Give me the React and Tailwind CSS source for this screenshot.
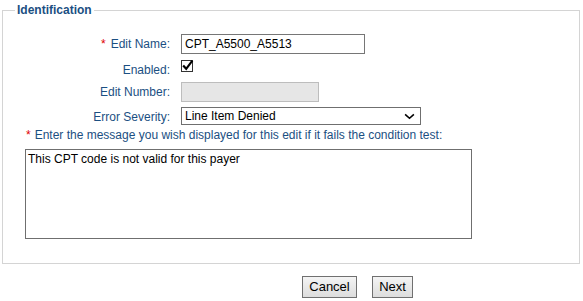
import React from 'react'

const labelCls = "w-[167px] shrink-0 pr-[0px] text-right text-[12px] text-[#1b4f82]"

const App = () => {
  return (
    <div className="w-[583px] h-[301px] bg-white font-['Liberation_Sans',Arial,sans-serif] overflow-hidden">
      <fieldset className="mt-[2px] ml-[2px] mr-[3px] border border-[#d4d4d4] pb-[24px]">
        <legend className="ml-[12px] px-[2px] text-[12px] leading-[16px] font-bold text-[#1b4f82]">
          Identification
        </legend>

        {/* Edit name */}
        <div className="mt-[16px] flex items-center h-[20px]">
          <div className={labelCls}>
            <span className="text-[#e00000] mr-[5px]">*</span>Edit Name:
          </div>
          <input
            className="ml-[11px] w-[184px] h-[20px] border border-[#767676] px-[3px] text-[12px] text-black outline-none"
            defaultValue="CPT_A5500_A5513"
          />
        </div>

        {/* Enabled */}
        <div className="mt-[5px] flex items-center h-[21px]">
          <div className={labelCls}>Enabled:</div>
          <span className="ml-[11px] self-start mt-[1px] w-[12px] h-[12px] border border-[#333] bg-white relative">
            <svg viewBox="0 0 12 12" className="absolute -left-[1px] -top-[3px] w-[13px] h-[14px]">
              <path d="M2 6.5 L4.8 9.5 L10.5 2" fill="none" stroke="#000" strokeWidth="2" />
            </svg>
          </span>
        </div>

        {/* Edit number */}
        <div className="mt-[2px] flex items-center h-[20px]">
          <div className={labelCls}>Edit Number:</div>
          <div className="ml-[11px] w-[138px] h-[20px] border border-[#bdbdbd] bg-[#e6e6e6]" />
        </div>

        {/* Error severity */}
        <div className="mt-[3px] flex items-center h-[22px]">
          <div className={labelCls + " pt-[2px]"}>Error Severity:</div>
          <div className="ml-[11px] w-[240px] h-[18px] border border-[#6f6f6f] flex items-center justify-between pl-[3px] pr-[5px] text-[12px] text-black">
            <span>Line Item Denied</span>
            <svg viewBox="0 0 12 8" className="w-[11px] h-[7px]">
              <path d="M1 1.5 L6 6 L11 1.5" fill="none" stroke="#000" strokeWidth="1.8" />
            </svg>
          </div>
        </div>

        {/* Message */}
        <div className="mt-[1px] pl-[23px] text-[12px] leading-[14px] text-[#1b4f82]">
          <span className="text-[#e00000] mr-[4px]">*</span>Enter the message you wish displayed for this edit if it fails the condition test:
        </div>
        <textarea
          className="block mt-[7px] ml-[22px] w-[447px] h-[90px] border border-[#6f6f6f] px-[2px] py-[2px] text-[12px] leading-[14px] text-black resize-none outline-none"
          defaultValue="This CPT code is not valid for this payer"
        />
      </fieldset>

      <div className="mt-[12px] flex justify-start pl-[302px] gap-[15px]">
        <button className="h-[22px] w-[55px] border border-[#707070] bg-gradient-to-b from-[#f4f4f4] to-[#dddddd] text-[13px] text-black">
          Cancel
        </button>
        <button className="h-[22px] w-[41px] border border-[#707070] bg-gradient-to-b from-[#f4f4f4] to-[#dddddd] text-[13px] text-black">
          Next
        </button>
      </div>
    </div>
  )
}

export default App
